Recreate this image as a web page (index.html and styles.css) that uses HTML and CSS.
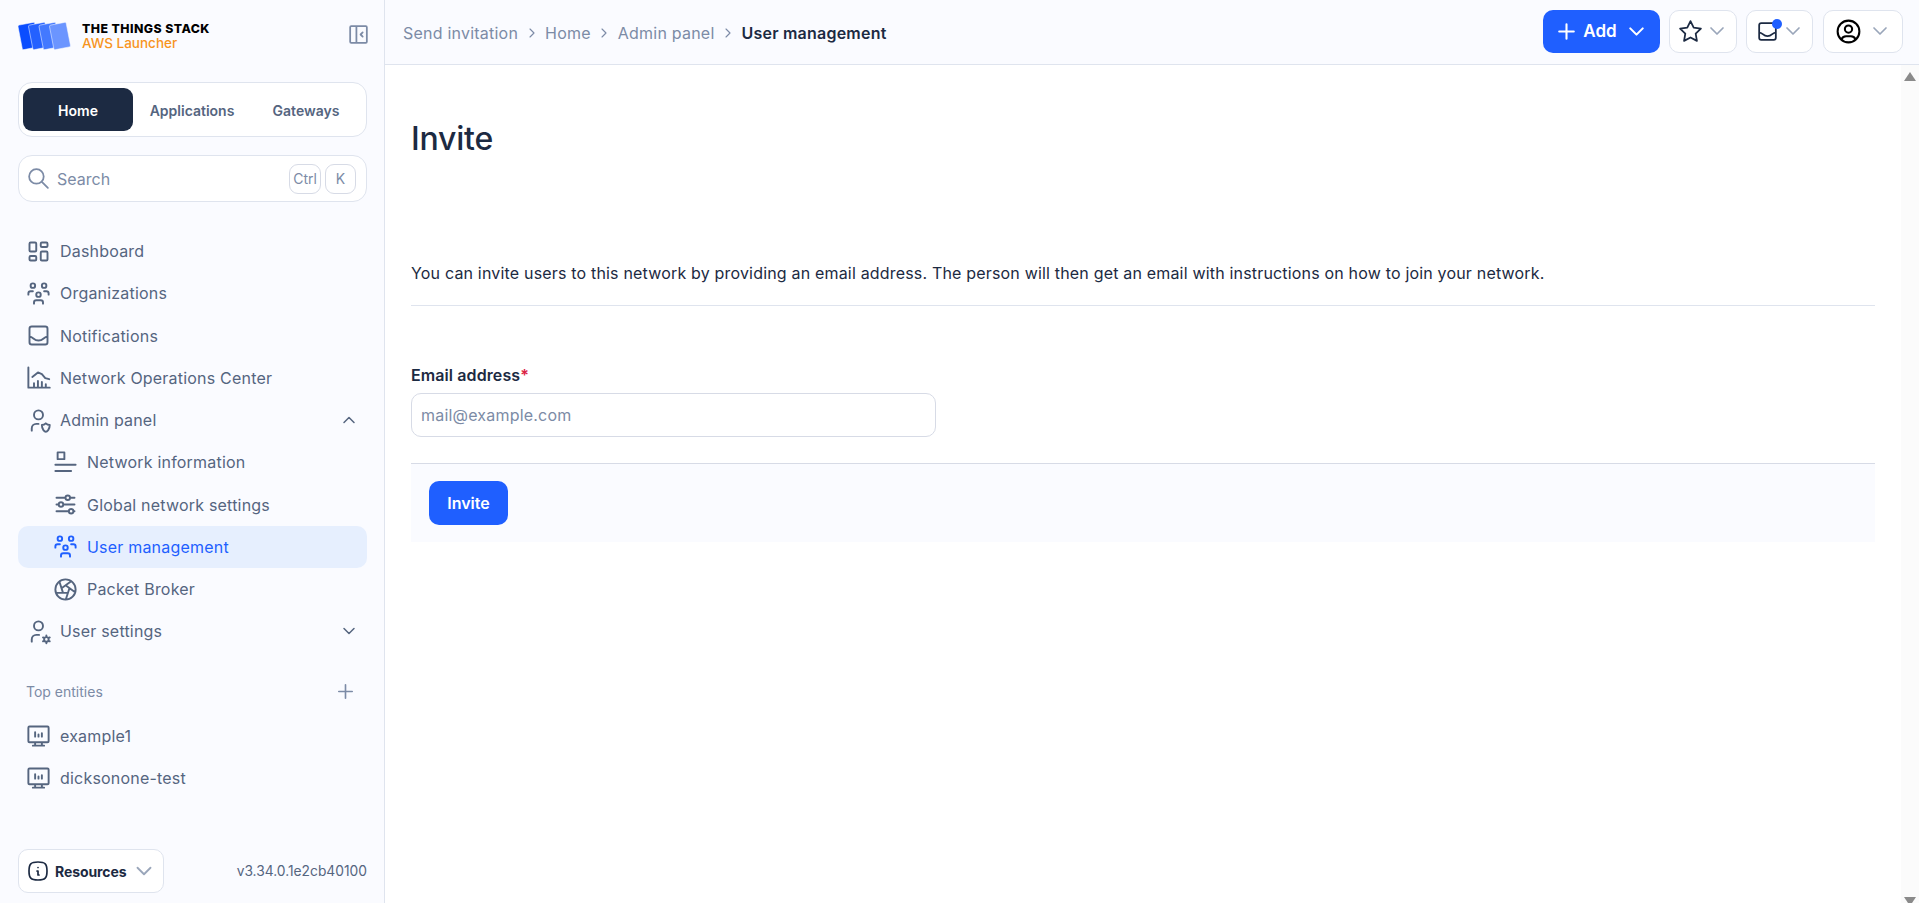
FILE: index.html
```html
<!DOCTYPE html>
<html lang="en">
<head>
<meta charset="utf-8">
<title>Invite</title>
<link rel="stylesheet" href="styles.css">
</head>
<body>
<svg class="sprite" xmlns="http://www.w3.org/2000/svg">
  <symbol id="i-dash" viewBox="0 0 24 24"><path d="M5 4h4a1 1 0 0 1 1 1v6a1 1 0 0 1-1 1H5a1 1 0 0 1-1-1V5a1 1 0 0 1 1-1M5 16h4a1 1 0 0 1 1 1v2a1 1 0 0 1-1 1H5a1 1 0 0 1-1-1v-2a1 1 0 0 1 1-1M15 12h4a1 1 0 0 1 1 1v6a1 1 0 0 1-1 1h-4a1 1 0 0 1-1-1v-6a1 1 0 0 1 1-1M15 4h4a1 1 0 0 1 1 1v2a1 1 0 0 1-1 1h-4a1 1 0 0 1-1-1V5a1 1 0 0 1 1-1"/></symbol>
  <symbol id="i-users" viewBox="0 0 24 24"><path d="M10 13a2 2 0 1 0 4 0a2 2 0 0 0-4 0M8 21v-1a2 2 0 0 1 2-2h4a2 2 0 0 1 2 2v1M15 5a2 2 0 1 0 4 0a2 2 0 0 0-4 0M17 10h2a2 2 0 0 1 2 2v1M5 5a2 2 0 1 0 4 0a2 2 0 0 0-4 0M3 13v-1a2 2 0 0 1 2-2h2"/></symbol>
  <symbol id="i-inbox" viewBox="0 0 24 24"><path d="M6 4h12a2 2 0 0 1 2 2v12a2 2 0 0 1-2 2H6a2 2 0 0 1-2-2V6a2 2 0 0 1 2-2zM4 13c3.500 0 3.500 3.500 8 3.500s4.500-3.500 8-3.500"/></symbol>
  <symbol id="i-chart" viewBox="0 0 24 24"><path d="M3 3v18h19M6.500 11.500l5-4 3.500 1.500 3 3.500 3.500 1M8 21v-4M11.500 21v-6M15 21v-5M18.500 21v-3"/></symbol>
  <symbol id="i-shield" viewBox="0 0 24 24"><path d="M6 21v-2a4 4 0 0 1 4-4h2M22 16c0 4-2.500 6-3.500 6s-3.500-2-3.500-6c1 0 2.500-.5 3.500-1.500c1 1 2.500 1.500 3.500 1.500zM8 7a4 4 0 1 0 8 0a4 4 0 0 0-8 0"/></symbol>
  <symbol id="i-info-lines" viewBox="0 0 24 24"><path d="M5 3h6v6H5zM3 14h18M3 19.500h14"/></symbol>
  <symbol id="i-adjust" viewBox="0 0 24 24"><path d="M12 6a2 2 0 1 0 4 0a2 2 0 1 0-4 0M4 6h8M16 6h4M6 12a2 2 0 1 0 4 0a2 2 0 1 0-4 0M4 12h2M10 12h10M15 18a2 2 0 1 0 4 0a2 2 0 1 0-4 0M4 18h11M19 18h1"/></symbol>
  <symbol id="i-aperture" viewBox="0 0 24 24"><path d="M3 12a9 9 0 1 0 18 0a9 9 0 1 0-18 0M3.600 15h10.550M6.551 4.938l3.260 10.034M17.032 4.636l-8.535 6.201M20.559 14.510l-8.535-6.201M12.257 20.916l3.261-10.034"/></symbol>
  <symbol id="i-cog" viewBox="0 0 24 24"><path d="M8 7a4 4 0 1 0 8 0a4 4 0 0 0-8 0M6 21v-2a4 4 0 0 1 4-4h2.500M17 19a2 2 0 1 0 4 0a2 2 0 1 0-4 0M19 15.500V17M19 21v1.500M22 17.250l-1.300.75M17.300 20l-1.300.75M16 17.250l1.300.75M20.700 20l1.300.75"/></symbol>
  <symbol id="i-desktop" viewBox="0 0 24 24"><path d="M4 4h16a1 1 0 0 1 1 1v12a1 1 0 0 1-1 1H4a1 1 0 0 1-1-1V5a1 1 0 0 1 1-1zM7 21h10M9 18v3M15 18v3M9 13V9M12 13v-2M15 13v-3"/></symbol>
  <symbol id="i-down" viewBox="0 0 24 24"><path d="M6 9l6 6 6-6"/></symbol>
  <symbol id="i-up" viewBox="0 0 24 24"><path d="M6 15l6-6 6 6"/></symbol>
  <symbol id="i-right" viewBox="0 0 24 24"><path d="M9 6l6 6-6 6"/></symbol>
  <symbol id="i-plus" viewBox="0 0 24 24"><path d="M12 5v14M5 12h14"/></symbol>
  <symbol id="i-star" viewBox="0 0 24 24"><path d="M12 17.750l-6.172 3.245 1.179-6.873-5-4.867 6.900-1 3.086-6.253 3.086 6.253 6.900 1-5 4.867 1.179 6.873z"/></symbol>
  <symbol id="i-user" viewBox="0 0 24 24"><path d="M3 12a9 9 0 1 0 18 0a9 9 0 1 0-18 0M9 10a3 3 0 1 0 6 0a3 3 0 1 0-6 0M6.168 18.849A4 4 0 0 1 10 16h4a4 4 0 0 1 3.834 2.855"/></symbol>
  <symbol id="i-info" viewBox="0 0 24 24"><path d="M12 8.500h.01M11 12h1v4h1M12 3c7.200 0 9 1.800 9 9s-1.800 9-9 9s-9-1.800-9-9s1.800-9 9-9z"/></symbol>
  <symbol id="i-search" viewBox="0 0 24 24"><path d="M3 10a7 7 0 1 0 14 0a7 7 0 1 0-14 0M21 21l-6-6"/></symbol>
  <symbol id="i-collapse" viewBox="0 0 24 24"><path d="M5 4h14a1 1 0 0 1 1 1v14a1 1 0 0 1-1 1H5a1 1 0 0 1-1-1V5a1 1 0 0 1 1-1zM10 4v16M16 10l-2 2 2 2"/></symbol>
</svg>

<div class="app">
  <aside class="sidebar">
    <div class="brand">
      <svg class="logo" viewBox="0 0 54 30" xmlns="http://www.w3.org/2000/svg">
        <rect class="l1" x="2" y="2.500" width="17" height="25" rx="1.500" transform="rotate(-11 10.500 15)"/>
        <rect class="l2" x="12.500" y="2.500" width="17" height="25" rx="1.500" transform="rotate(-11 21 15)"/>
        <rect class="l3" x="23" y="2.500" width="17" height="25" rx="1.500" transform="rotate(-11 31.500 15)"/>
        <rect class="l4" x="33.500" y="2.500" width="17" height="25" rx="1.500" transform="rotate(-11 42 15)"/>
      </svg>
      <div class="brand-text">
        <div class="brand-title">THE THINGS STACK</div>
        <div class="brand-sub">AWS Launcher</div>
      </div>
      <svg class="ic collapse"><use href="#i-collapse"/></svg>
    </div>

    <div class="tabs">
      <div class="tab tab-active">Home</div>
      <div class="tab">Applications</div>
      <div class="tab">Gateways</div>
    </div>

    <div class="search">
      <svg class="ic search-ic"><use href="#i-search"/></svg>
      <span class="search-text">Search</span>
      <span class="key">Ctrl</span>
      <span class="key">K</span>
    </div>

    <nav class="nav nav-main">
      <a class="item"><svg class="ic"><use href="#i-dash"/></svg>Dashboard</a>
      <a class="item"><svg class="ic"><use href="#i-users"/></svg>Organizations</a>
      <a class="item"><svg class="ic"><use href="#i-inbox"/></svg>Notifications</a>
      <a class="item"><svg class="ic"><use href="#i-chart"/></svg>Network Operations Center</a>
      <a class="item"><svg class="ic"><use href="#i-shield"/></svg>Admin panel<svg class="ic caret"><use href="#i-up"/></svg></a>
      <a class="item sub"><svg class="ic"><use href="#i-info-lines"/></svg>Network information</a>
      <a class="item sub"><svg class="ic"><use href="#i-adjust"/></svg>Global network settings</a>
      <a class="item sub active"><svg class="ic"><use href="#i-users"/></svg>User management</a>
      <a class="item sub"><svg class="ic"><use href="#i-aperture"/></svg>Packet Broker</a>
      <a class="item"><svg class="ic"><use href="#i-cog"/></svg>User settings<svg class="ic caret"><use href="#i-down"/></svg></a>
    </nav>

    <div class="section-head">
      <span>Top entities</span>
      <svg class="ic plus"><use href="#i-plus"/></svg>
    </div>
    <nav class="nav">
      <a class="item"><svg class="ic"><use href="#i-desktop"/></svg>example1</a>
      <a class="item"><svg class="ic"><use href="#i-desktop"/></svg>dicksonone-test</a>
    </nav>

    <div class="side-foot">
      <div class="resources">
        <svg class="ic res-ic"><use href="#i-info"/></svg>
        <span>Resources</span>
        <svg class="ic res-caret"><use href="#i-down"/></svg>
      </div>
      <span class="version">v3.34.0.1e2cb40100</span>
    </div>
  </aside>

  <div class="right">
    <header class="topbar">
      <div class="crumbs">
        <span>Send invitation</span><svg class="ic crumb-sep"><use href="#i-right"/></svg>
        <span>Home</span><svg class="ic crumb-sep"><use href="#i-right"/></svg>
        <span>Admin panel</span><svg class="ic crumb-sep"><use href="#i-right"/></svg>
        <span class="crumb-current">User management</span>
      </div>
      <div class="actions">
        <button class="btn-add"><svg class="ic"><use href="#i-plus"/></svg><span>Add</span><svg class="ic add-caret"><use href="#i-down"/></svg></button>
        <button class="btn-ghost btn-star"><svg class="ic ghost-ic"><use href="#i-star"/></svg><svg class="ic ghost-caret"><use href="#i-down"/></svg></button>
        <button class="btn-ghost btn-inbox"><span class="inbox-wrap"><svg class="ic ghost-ic"><use href="#i-inbox"/></svg><span class="dot"></span></span><svg class="ic ghost-caret"><use href="#i-down"/></svg></button>
        <button class="btn-ghost btn-user"><svg class="ic user-ic"><use href="#i-user"/></svg><svg class="ic ghost-caret"><use href="#i-down"/></svg></button>
      </div>
    </header>

    <div class="body">
      <main class="content">
        <h1>Invite</h1>
        <p class="lead">You can invite users to this network by providing an email address. The person will then get an email with instructions on how to join your network.</p>
        <form class="form">
          <label class="label" for="email">Email address<span class="req">*</span></label>
          <input class="input" id="email" type="text" placeholder="mail@example.com">
          <div class="form-foot"><button class="btn-invite" type="button">Invite</button></div>
        </form>
      </main>
      <div class="scrollbar">
        <span class="arrow arrow-up"></span>
        <span class="arrow arrow-down"></span>
      </div>
    </div>
  </div>
</div>
</body>
</html>
```

FILE: styles.css
```css
* { box-sizing: border-box; }
html, body { margin: 0; height: 100%; overflow: hidden; }
body { font-family: Inter, "Noto Sans", sans-serif; color: #1c2a42; background: #fff; }
.sprite { display: none; }
.ic { width: 24px; height: 24px; fill: none; stroke: currentColor; stroke-width: 1.700; stroke-linecap: round; stroke-linejoin: round; flex: none; }

.app { display: flex; height: 903px; }

.sidebar { width: 385px; flex: none; background: #fafbff; border-right: 1px solid #dfe4ee; padding: 0 17px 10px 18px; display: flex; flex-direction: column; }

.brand { display: flex; align-items: center; height: 64px; padding-top: 7px; }
.logo { width: 54px; height: 30px; flex: none; margin-right: 10px; }
.logo rect { stroke: #fafbff; stroke-width: .5; }
.l1 { fill: #0a4dff; } .l2 { fill: #2461ff; } .l3 { fill: #4379ff; } .l4 { fill: #6b95ff; }
.brand-text { flex: 1; }
.brand-title { font-size: 12.300px; line-height: 14px; font-weight: 800; letter-spacing: .45px; color: #000; }
.brand-sub { font-size: 13.500px; line-height: 14px; font-weight: 500; color: #f7941d; }
.collapse { width: 25px; height: 25px; color: #7c8ba6; margin-top: -2px; margin-right: -4px; }

.tabs { margin-top: 18px; height: 55px; border: 1px solid #dfe4ee; border-radius: 14px; background: #fff; padding: 5px 4px; display: flex; align-items: stretch; }
.tab { flex: none; display: flex; align-items: center; justify-content: center; font-size: 14px; font-weight: 600; color: #55657f; width: 114px; padding-top: 1px; }
.tab-active { width: 110px; margin-right: 2px; background: #1c2a42; color: #fff; border-radius: 9px; }

.search { margin-top: 18px; height: 47px; border: 1px solid #dfe4ee; border-radius: 14px; background: #fff; padding: 0 10px 0 7px; display: flex; align-items: center; gap: 4px; color: #7c8ba6; }
.search-ic { width: 25px; height: 25px; }
.search-text { flex: 1; font-size: 16px; padding-left: 2px; }
.key { height: 30px; min-width: 31px; padding: 0 3px; border: 1px solid #d7dbe6; border-radius: 9px; display: flex; align-items: center; justify-content: center; font-size: 14px; }

.nav { display: flex; flex-direction: column; }
.nav-main { margin-top: 28px; }
.item { height: 42.250px; display: flex; align-items: center; padding-left: 7px; gap: 8px; font-size: 16px; letter-spacing: .2px; color: #55657f; border-radius: 10px; }
.item .ic { width: 27px; height: 27px; stroke-width: 1.700; }
.item.sub { padding-left: 34px; }
.item .ic.caret { width: 20px; height: 20px; margin-left: auto; margin-right: 8px; stroke-width: 1.800; }
.item.active { background: #e6effe; color: #1f5fff; }

.section-head { margin-top: 27px; margin-bottom: 11px; padding: 0 10px 0 8px; height: 24px; display: flex; align-items: center; justify-content: space-between; font-size: 14px; color: #7c8ba6; }
.plus { width: 23px; height: 23px; }

.side-foot { margin-top: auto; display: flex; align-items: center; justify-content: space-between; }
.resources { width: 146px; height: 44px; border: 1px solid #dfe4ee; border-radius: 10px; background: #fff; display: flex; align-items: center; padding-left: 7px; gap: 5px; font-size: 14px; font-weight: 700; letter-spacing: -.1px; color: #1c2a42; }
.res-ic { width: 24px; height: 24px; }
.res-caret { width: 26px; height: 26px; color: #9aa6ba; }
.version { font-size: 13.800px; color: #55657f; }

.right { flex: 1; min-width: 0; display: flex; flex-direction: column; }
.topbar { height: 65px; flex: none; background: #fafbff; border-bottom: 1px solid #dfe4ee; display: flex; align-items: center; justify-content: space-between; padding: 0 16px 2px 18px; }
.crumbs { display: flex; align-items: center; font-size: 16px; letter-spacing: .22px; color: #7c8ba6; padding-top: 3px; }
.crumb-sep { width: 16px; height: 16px; margin: 0 5.500px; }
.crumb-current { font-weight: 600; color: #1c2a42; }
.actions { display: flex; align-items: center; gap: 9px; }
button { font-family: inherit; cursor: pointer; }
.btn-add { width: 117px; height: 43px; border: 0; border-radius: 10px; background: #1f5fff; color: #fff; display: flex; align-items: center; justify-content: center; gap: 4px; font-size: 17px; font-weight: 600; }
.btn-add .ic { width: 25px; height: 25px; stroke-width: 2; }
.btn-add .add-caret { margin-left: 3px; }
.btn-ghost { height: 43px; border: 1px solid #dfe4ee; border-radius: 10px; background: #fff; display: flex; align-items: center; justify-content: center; gap: 2px; padding: 0; }
.btn-star { width: 68px; }
.btn-inbox { width: 67px; gap: 1px; }
.btn-user { width: 80px; gap: 5px; margin-left: 1px; }
.ghost-ic { width: 25px; height: 25px; color: #1c2a42; }
.user-ic { color: #000; width: 29px; height: 29px; }
.ghost-caret { width: 24px; height: 24px; color: #9aa6ba; }
.inbox-wrap { position: relative; display: flex; }
.dot { position: absolute; top: 0; right: -2px; width: 10px; height: 10px; border-radius: 50%; background: #1f5fff; }

.body { flex: 1; min-height: 0; display: flex; }
.content { flex: 1; min-width: 0; padding: 0 26px; }
h1 { margin: 54px 0 0; font-size: 32px; line-height: 40px; font-weight: 550; letter-spacing: -.2px; color: #1c2a42; }
.lead { margin: 102px 0 0; padding-bottom: 20px; font-size: 16px; line-height: 24px; letter-spacing: .18px; border-bottom: 1px solid #dfe4ee; color: #1c2a42; }
.form { margin-top: 57px; }
.label { display: block; font-size: 16px; line-height: 24px; font-weight: 600; letter-spacing: .1px; color: #1c2a42; }
.req { color: #db2344; }
.input { display: block; margin-top: 6px; width: 525px; height: 44px; border: 1px solid #d7dbe6; border-radius: 10px; padding: 0 9px; font-family: inherit; font-size: 16px; letter-spacing: .2px; background: #fff; outline: none; }
.input::placeholder { color: #7c8ba6; opacity: 1; }
.form-foot { margin-top: 26px; border-top: 1px solid #d7dbe6; background: #fafbff; padding: 17px 18px; height: 79px; }
.btn-invite { width: 79px; height: 44px; border: 0; border-radius: 10px; background: #1f5fff; color: #fff; font-size: 16px; font-weight: 600; }

.scrollbar { width: 18px; flex: none; background: #fbfbfb; display: flex; flex-direction: column; justify-content: space-between; align-items: center; padding: 7px 0 0; overflow: hidden; }
.arrow { width: 0; height: 0; border-left: 6.500px solid transparent; border-right: 6.500px solid transparent; }
.arrow-up { border-bottom: 9px solid #8a8a8a; }
.arrow-down { border-top: 9px solid #8a8a8a; margin-bottom: -3px; }
```
